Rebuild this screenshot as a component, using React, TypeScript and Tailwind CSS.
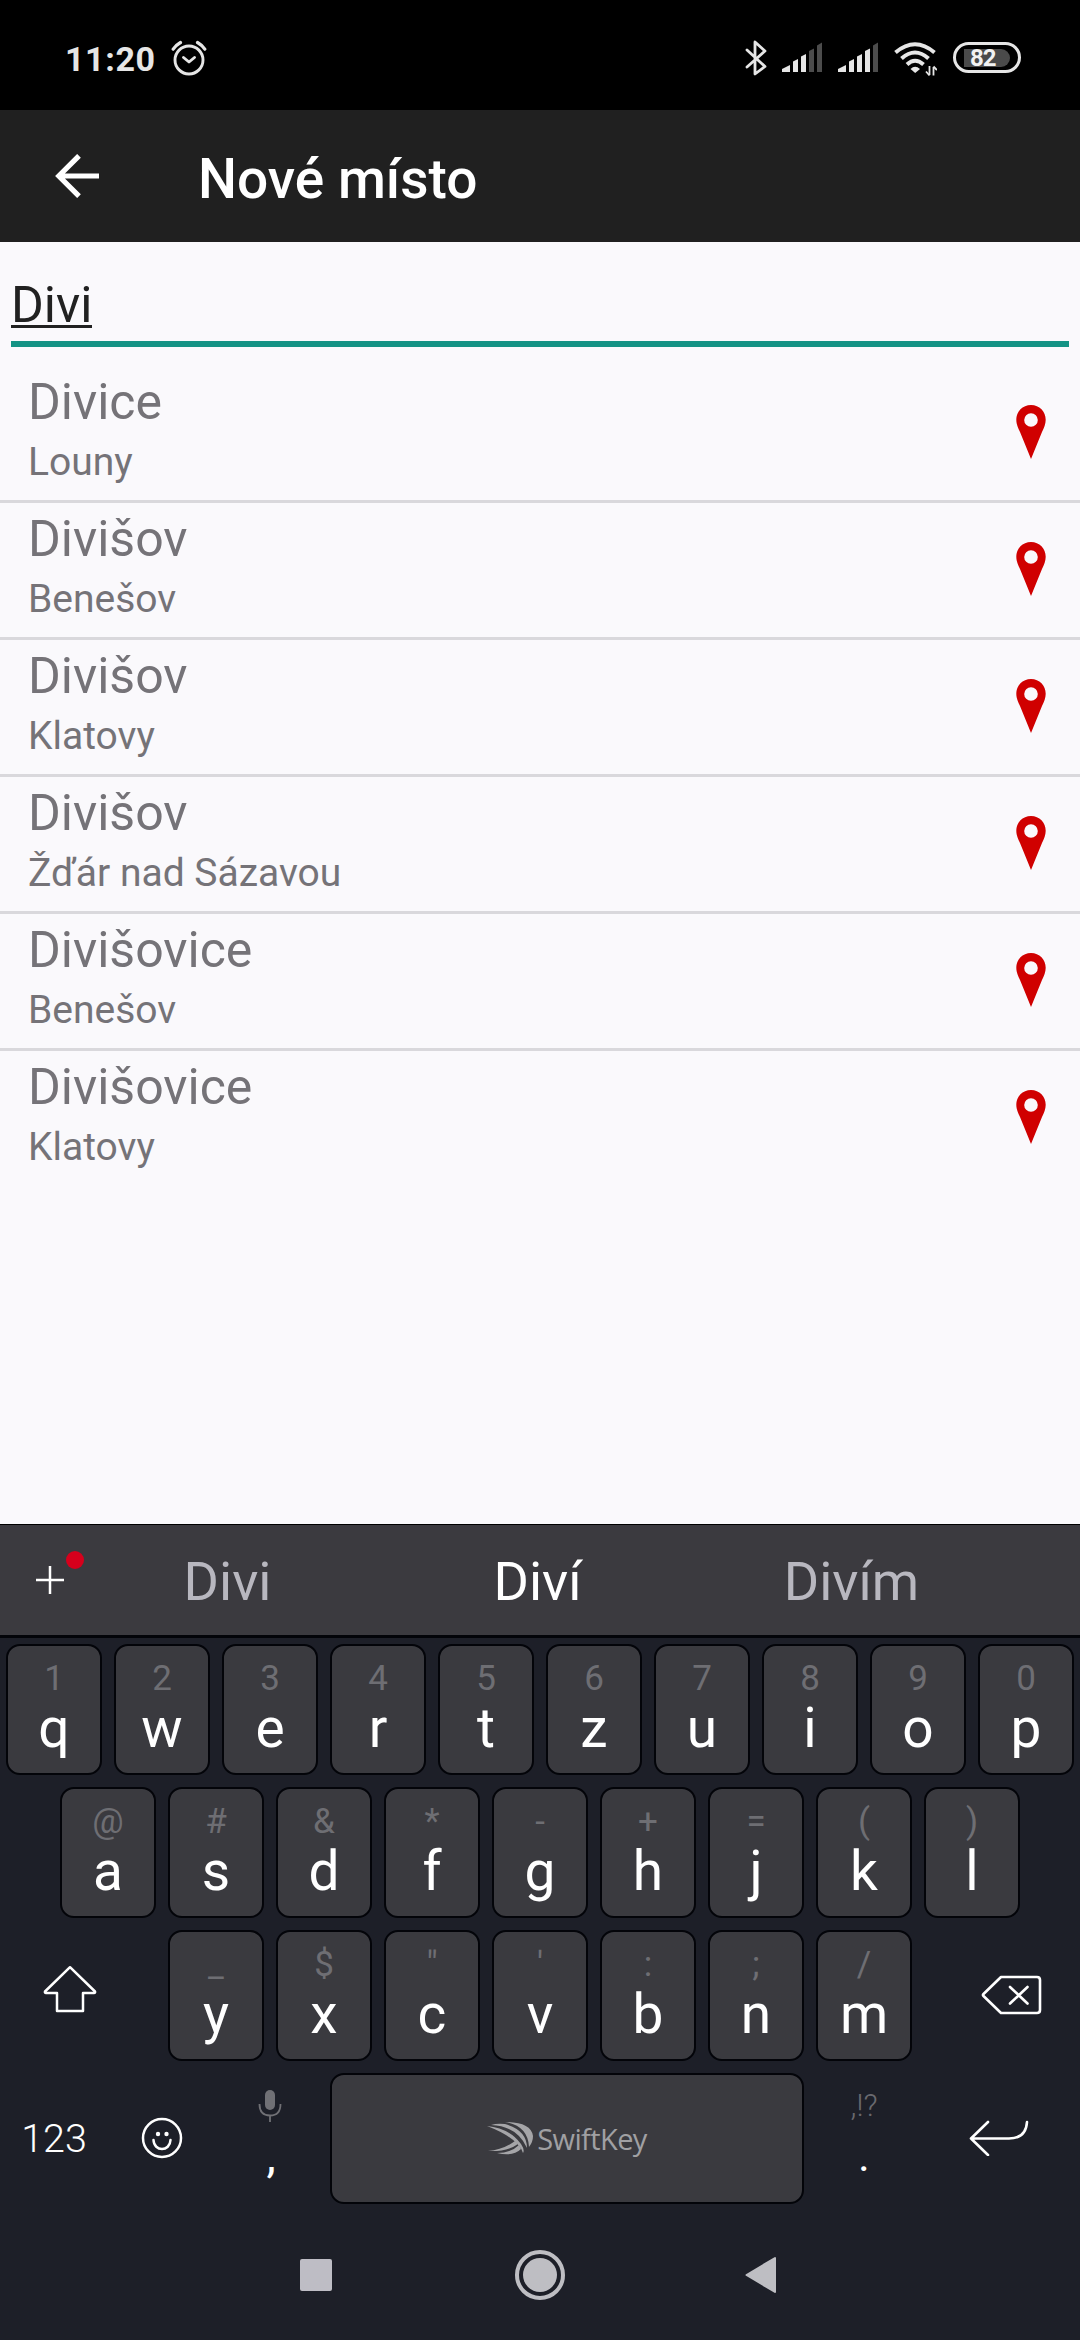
import React from "react";

const ROBOTO = "font-['Roboto',sans-serif]";

const places = [
  ["Divice", "Louny"],
  ["Divišov", "Benešov"],
  ["Divišov", "Klatovy"],
  ["Divišov", "Žďár nad Sázavou"],
  ["Divišovice", "Benešov"],
  ["Divišovice", "Klatovy"],
];

const topRow = [["q", "1"], ["w", "2"], ["e", "3"], ["r", "4"], ["t", "5"], ["z", "6"], ["u", "7"], ["i", "8"], ["o", "9"], ["p", "0"]];
const homeRow = [["a", "@"], ["s", "#"], ["d", "&"], ["f", "*"], ["g", "-"], ["h", "+"], ["j", "="], ["k", "("], ["l", ")"]];
const bottomRow = [["y", "_"], ["x", "$"], ["c", '"'], ["v", "'"], ["b", ":"], ["n", ";"], ["m", "/"]];

function Signal({ level }: { level: number }) {
  const bars = [
    "M0 30V27L8 23V30Z",
    "M11 30V19.5L16 17V30Z",
    "M19 30V14.5L24 12V30Z",
    "M27 30V9L32 6.5V30Z",
    "M35 30V3.5L40 .5V30Z",
  ];
  return (
    <svg className="h-[30px] w-10" viewBox="0 0 40 30">
      {bars.map((d, i) => (
        <path key={d} d={d} fill={i < level ? "#e6e6e6" : "#4c4c4c"} />
      ))}
    </svg>
  );
}

function StatusBar() {
  return (
    <div className="flex h-[110px] items-start bg-black text-[#e6e6e6]">
      <div className="ml-[65px] mt-[39px] w-[90px] whitespace-nowrap text-[34px] font-bold leading-10 tracking-[0.6px]">11:20</div>
      <svg className="ml-4 mt-10 h-9 w-9" viewBox="0 0 36 36" fill="none" stroke="#e6e6e6" strokeWidth="2.9" strokeLinecap="round" strokeLinejoin="round">
        <circle cx="18" cy="20" r="14" />
        <path d="M12.5 17.5L18 22L23.5 17.5" />
        <path d="M2.2 9.2Q5 5 9.500 2.5M33.800 9.200Q31 5 26.500 2.500" strokeWidth="3.200" />
      </svg>
      <svg className="ml-[538px] mt-10 h-9 w-[22px]" viewBox="0 0 22 36" fill="none" stroke="#e6e6e6" strokeWidth="2.800" strokeLinejoin="round" strokeLinecap="round">
        <path d="M2 10L20 26.500L10 34V2L20 11L2 27" />
      </svg>
      <div className="ml-[15px] mt-[42px]"><Signal level={3} /></div>
      <div className="ml-4 mt-[42px]"><Signal level={4} /></div>
      <svg className="ml-4 mt-[42px] h-9 w-[43px]" viewBox="0 0 43 36" fill="none" stroke="#e6e6e6" strokeWidth="4">
        <path d="M1.500 10.500Q21 -6 40.500 10.500" />
        <path d="M7.500 16.500Q21 4.500 34.500 16.500" />
        <path d="M13 22.500Q21 15 29.500 22.500" />
        <path d="M21.200 31L16.500 27Q21 22.500 26 27Z" fill="#e6e6e6" stroke="none" />
        <path d="M35.500 24V33M39.500 33.500V25" strokeWidth="1.800" />
        <path d="M32 29.500L35.500 33.500M43 28L39.500 24.500" strokeWidth="1.800" />
      </svg>
      <div className="ml-4 mt-[42px] flex h-[31px] w-[68px] items-center justify-center rounded-full border-[3px] border-[#e6e6e6]">
        <div className="flex h-[18px] w-[46px] items-center rounded-r-full bg-[#4a4a4a] pl-[6px] text-[24px] font-bold leading-none tracking-[-1px] text-[#f2f2f2]">82</div>
      </div>
    </div>
  );
}

function Pin() {
  return (
    <svg className="mr-[34px] mt-[39px] h-[54px] w-[30px]" viewBox="0 0 30 54">
      <path fillRule="evenodd" fill="#d00000" d="M15 0C6.500 0 .3 6.500 .3 14.800C.3 19 2 23 4 27L15 54L26 27C28 23 29.700 19 29.700 14.800C29.700 6.500 23.500 0 15 0ZM15 8.200A6.800 6.800 0 1 1 15 21.800A6.800 6.800 0 1 1 15 8.200Z" />
    </svg>
  );
}

function Key({ label, hint }: { label: string; hint: string }) {
  return (
    <div className="flex h-[131px] w-24 flex-col items-center rounded-[14px] border-2 border-[#030409] bg-[#3a3a3f]">
      <div className="mt-[13px] h-[39px] text-[35px] leading-10 text-[#6e6e73]">{hint}</div>
      <div className="h-[60px] text-[55px] leading-[60px] text-white">{label}</div>
    </div>
  );
}

function Keys({ items }: { items: string[][] }) {
  return (
    <div className="flex gap-3">
      {items.map(([label, hint]) => (
        <Key key={label} label={label} hint={hint} />
      ))}
    </div>
  );
}

export default function App() {
  return (
    <div className={`flex h-[2340px] w-[1080px] flex-col overflow-hidden bg-[#faf9fc] ${ROBOTO}`}>
      <StatusBar />
      <header className="flex h-[132px] items-start bg-[#202020] text-white">
        <svg className="ml-[55px] mt-11 h-11 w-11" viewBox="0 0 44 44" fill="none" stroke="#fff" strokeWidth="5.200">
          <path d="M44 22H4M24 1.800L3.800 22L24 42.200" />
        </svg>
        <h1 className="ml-[99px] mt-[37px] text-[55px] font-medium leading-[64px]">Nové místo</h1>
      </header>

      <div className="mx-[11px] flex h-[105px] items-end border-b-[6px] border-[#149385]">
        <div className="mb-[13px] h-[51px] w-[81px] border-b-[3px] border-[#212121] text-center text-[50px] leading-[66px] text-[#212121]">
          <div className="-mt-[5px]">Divi</div>
        </div>
      </div>

      <ul className="mt-[19px] flex flex-col">
        {places.map(([name, district], i) => (
          <li key={i} className="flex h-[137px] items-start justify-between border-b-[3px] border-[#d9d8dc] text-[#757378] last:border-transparent">
            <div className="ml-7">
              <div className="mt-[7px] h-[58px] text-[50px] leading-[58px]">{name}</div>
              <div className="mt-[8px] text-[39px] leading-[46px]">{district}</div>
            </div>
            <Pin />
          </li>
        ))}
      </ul>

      <div className="mt-auto flex h-[816px] flex-col bg-[#1d1f28]">
        <div className="flex h-[114px] items-start border-b-[3px] border-t border-b-[#030409] border-t-black bg-[#3b3a3f] text-[54px] leading-16 text-[#b8b7bf]">
          <div className="relative ml-9 mt-[41px] h-7 w-7">
            <svg className="h-7 w-7" viewBox="0 0 28 28" stroke="#fff" strokeWidth="2.500"><path d="M0 14H28M14 0V28" /></svg>
            <div className="absolute -top-[15px] left-[30px] h-[18px] w-[18px] rounded-full bg-[#d6001c]" />
          </div>
          <div className="ml-[8px] mt-[25px] w-[311px] text-center">Divi</div>
          <div className="mt-[25px] w-[309px] text-center text-white">Diví</div>
          <div className="mt-[25px] w-[319px] text-center">Divím</div>
        </div>

        <div className="mt-[6px] flex flex-col gap-3">
          <div className="flex justify-center"><Keys items={topRow} /></div>
          <div className="flex justify-center"><Keys items={homeRow} /></div>
          <div className="flex items-start">
            <div className="w-[168px]">
              <svg className="ml-[43px] mt-[35px] h-12 w-[54px]" viewBox="0 0 54 48" fill="none" stroke="#fff" strokeWidth="2.500" strokeLinejoin="round">
                <path d="M27 2.200L52 26.500Q52.500 28 51 28H40V46H14V28H3Q1.500 28 2 26.500Z" />
              </svg>
            </div>
            <Keys items={bottomRow} />
            <svg className="ml-[69px] mt-[45px] h-10 w-[61px]" viewBox="0 0 61 40" fill="none" stroke="#fff" strokeWidth="2.600" strokeLinejoin="round" strokeLinecap="round">
              <path d="M20 2H56Q59 2 59 5V35Q59 38 56 38H20L2.500 21Q1.500 20 2.500 19Z" />
              <path d="M29 12L46.500 28.500M46.500 12L29 28.500" />
            </svg>
          </div>
          <div className="flex h-[131px] items-start text-white">
            <div className="w-[108px] pt-[43px] text-center text-[39.500px] font-light leading-[46px]">123</div>
            <svg className="mx-[33px] mt-[44px] h-[42px] w-[42px]" viewBox="0 0 42 42" fill="none" stroke="#fff" strokeWidth="2.500" strokeLinecap="round">
              <circle cx="21" cy="21" r="19" />
              <path d="M12.500 23C13 35 29 35 29.500 23" />
              <circle cx="17" cy="17" r="2.200" fill="#fff" stroke="none" />
              <circle cx="25.500" cy="17" r="2.200" fill="#fff" stroke="none" />
            </svg>
            <div className="flex w-[114px] flex-col items-center pr-[6px]">
              <svg className="mt-[17px] h-8 w-6" viewBox="0 0 24 32" fill="none" stroke="#707075" strokeWidth="1.800">
                <rect x="7" y="0" width="10" height="20" rx="5" fill="#707075" stroke="none" />
                <path d="M1.500 14Q1.500 25.500 12 25.500T22.500 14M12 25.500V32" />
              </svg>
              <div className="mt-[2px] pl-[2px] text-[47px] leading-[64px]">,</div>
            </div>
            <div className="flex h-[131px] w-[474px] items-center justify-center rounded-[14px] border-2 border-[#030409] bg-[#3a3a3f]">
              <svg className="h-[34px] w-[46px]" viewBox="0 0 46 34" fill="#a5a5a8">
                <path d="M0 4Q22 6 34 22Q38 28 36 31Q31 16 0 4Z" />
                <path d="M4 3Q30 4 40 26Q40 8 18 2Q10 1 4 3Z" />
                <path d="M18 0Q44 0 46 14Q46 20 42 25Q41 4 18 0Z" />
                <path d="M1 29Q16 28 28 19L31 22Q20 30 1 29Z" />
                <path d="M10 31Q24 31 32 23L34 27Q26 35 10 31Z" />
              </svg>
              <div className="ml-1 font-['Open_Sans',sans-serif] text-[29px] leading-10 tracking-[-0.6px] text-[#a0a0a3]">SwiftKey</div>
            </div>
            <div className="flex w-[120px] flex-col items-center">
              <div className="mt-[15px] text-[31px] font-light leading-9 text-[#69696f]">,!?</div>
              <div className="text-[45px] leading-[64px]">.</div>
            </div>
            <svg className="ml-[45px] mt-[47px] h-9 w-[60px]" viewBox="0 0 60 36" fill="none" stroke="#fff" strokeWidth="2.600" strokeLinecap="round" strokeLinejoin="round">
              <path d="M19 2L2 18.500L19 35M2 18.500H40Q57 18.500 58 2" />
            </svg>
          </div>
        </div>

        <div className="mt-[46px] flex h-[50px] items-center">
          <div className="ml-[300px] h-8 w-8 rounded-[2px] bg-[#bebdc5]" />
          <div className="ml-[183px] flex h-[50px] w-[50px] items-center justify-center rounded-full border-4 border-[#bebec3]">
            <div className="h-[34px] w-[34px] rounded-full bg-[#bebec3]" />
          </div>
          <svg className="ml-[180px] h-[38px] w-8" viewBox="0 0 32 38" fill="#bebec3" stroke="#bebec3" strokeWidth="2" strokeLinejoin="round">
            <path d="M1.500 19L30 2V36Z" />
          </svg>
        </div>
      </div>
    </div>
  );
}
